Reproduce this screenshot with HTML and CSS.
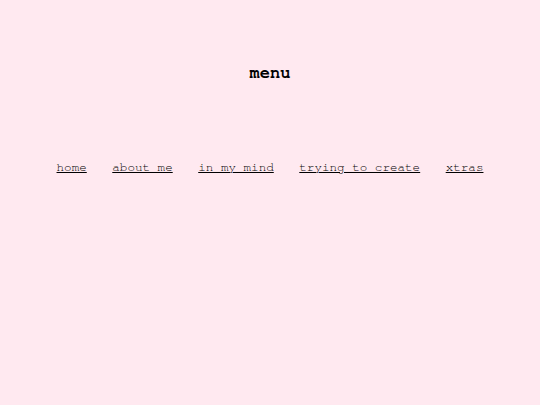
FILE: index.html
```html
<!DOCTYPE html>
<html>
<head>
<meta charset="utf-8">
<link rel="stylesheet" href="styles.css">
</head>
<body>
<div class="page">
  <h1 class="title">menu</h1>
  <nav class="nav">
    <a href="#">home</a>
    <a href="#">about me</a>
    <a href="#">in my mind</a>
    <a href="#">trying to create</a>
    <a href="#">xtras</a>
  </nav>
</div>
</body>
</html>
```
FILE: styles.css
```css
html, body {
  margin: 0;
  padding: 0;
  background: #ffe9f0;
}
.page {
  width: 540px;
  height: 405px;
  display: flex;
  flex-direction: column;
  align-items: center;
  font-family: "Nimbus Mono PS", "Nimbus Mono L", "FreeMono", "Courier", "Liberation Mono", monospace;
}
.title {
  margin: 63px 0 0 0;
  font-size: 17px;
  line-height: 20px;
  font-weight: bold;
  color: #000;
}
.nav {
  margin-top: 77px;
  display: flex;
  gap: 25.5px;
  font-size: 12.6px;
  line-height: 16px;
}
.nav a {
  color: #000;
  text-decoration: underline;
}
```
